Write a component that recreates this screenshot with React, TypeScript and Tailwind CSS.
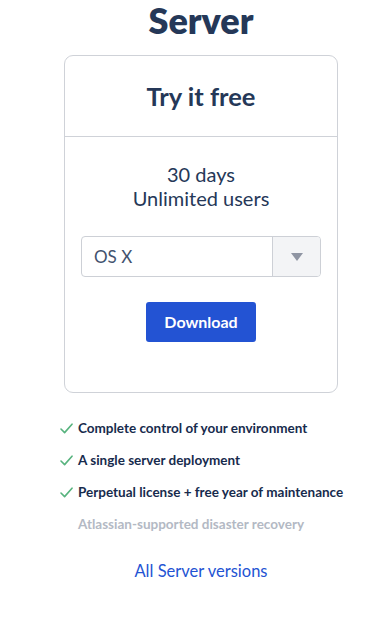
const features = [
  { text: "Complete control of your environment", included: true },
  { text: "A single server deployment", included: true },
  { text: "Perpetual license + free year of maintenance", included: true },
  { text: "Atlassian-supported disaster recovery", included: false },
];

function Check() {
  return (
    <svg width="13" height="11" viewBox="0 0 13 11" fill="none" className="shrink-0">
      <path d="M1 6 L4.6 9.6 L12 1.2" stroke="#57b37e" strokeWidth="1.6" strokeLinecap="round" strokeLinejoin="round" />
    </svg>
  );
}

export default function App() {
  return (
    <div className="min-h-[621px] bg-white text-[#253858]" style={{ fontFamily: "Lato, 'Open Sans', sans-serif" }}>
      <div className="w-[274px] ml-[64px] flex flex-col">
        <h1 className="mt-[2px] text-center text-[36px] leading-[36px] font-extrabold text-[#253858]">Server</h1>

        <div className="mt-[17px] border border-[#cfd2d8] rounded-[9px] flex flex-col">
          <div className="h-[81px] flex items-center justify-center border-b border-[#cfd2d8]">
            <h2 className="text-[25.5px] font-bold">Try it free</h2>
          </div>
          <div className="flex flex-col items-center pt-[25px] pb-[50px] px-[16px]">
            <p className="text-[20px] leading-[24px] text-center">30 days</p>
            <p className="text-[20px] leading-[24px] text-center">Unlimited users</p>
            <div className="mt-[26px] w-full h-[41px] flex border border-[#cdd0d6] rounded-[4px] overflow-hidden">
              <div className="flex-1 flex items-center pl-[12px] text-[17px] text-[#42526e]">OS X</div>
              <div className="w-[48px] bg-[#f3f4f6] border-l border-[#cdd0d6] flex items-center justify-center">
                <svg width="12" height="8" viewBox="0 0 12 8">
                  <path d="M0 0 H12 L6 8 Z" fill="#8f95a3" />
                </svg>
              </div>
            </div>
            <button className="mt-[25px] w-[110px] h-[40px] rounded-[3px] bg-[#2353d3] text-white text-[16px] font-bold">Download</button>
          </div>
        </div>

        <ul className="mt-[25px] ml-[-4px] flex flex-col gap-[12px]">
          {features.map((f) => (
            <li key={f.text} className="h-[20px] flex items-center gap-[5px] text-[13.5px] font-bold whitespace-nowrap">
              {f.included ? <Check /> : <span className="w-[13px] shrink-0" />}
              <span className={f.included ? "text-[#172b4d]" : "text-[#b3b9c4]"}>{f.text}</span>
            </li>
          ))}
        </ul>

        <a href="#" className="mt-[27px] text-center text-[16.5px] leading-[20px] text-[#2353d3]">All Server versions</a>
      </div>
    </div>
  );
}
